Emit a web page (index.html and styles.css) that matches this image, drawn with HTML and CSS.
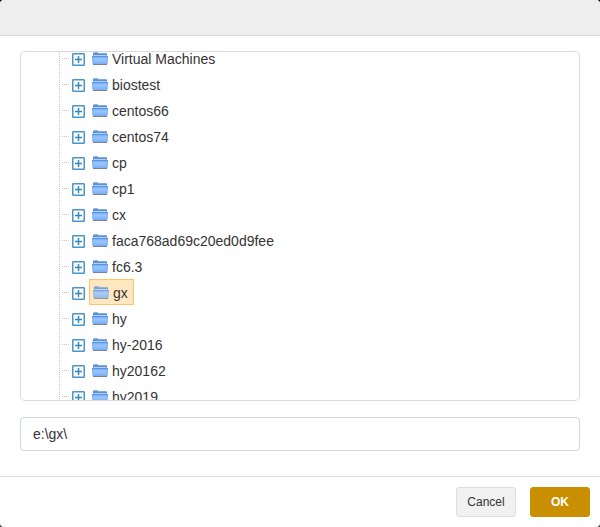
FILE: index.html
```html
<!DOCTYPE html>
<html lang="en">
<head>
<meta charset="utf-8">
<title>Select folder</title>
<link rel="stylesheet" href="styles.css">
</head>
<body>
<svg width="0" height="0" class="defs">
  <defs>
    <linearGradient id="face" x1="0" y1="0" x2="0" y2="1">
      <stop offset="0" stop-color="#6ca2ee"/><stop offset=".4" stop-color="#9ac7ff"/><stop offset="1" stop-color="#79adf8"/>
    </linearGradient>
    <symbol id="folder" viewBox="0 0 16 13">
      <path d="M1 5V1.2L2 .2H5.4L6.4 1.2H14.5L15 1.8V5Z" fill="#5890df"/>
      <path d="M2 .6H5.4" stroke="#8bb5ee" stroke-width=".8"/>
      <path d="M1.5 3.5H14.5" stroke="#b4d5fb"/>
      <path d="M0 4H16L15.2 12H.8Z" fill="url(#face)"/>
      <path d="M0 4.5H16" stroke="#5c94e4"/>
      <path d="M.4 4L1.1 12M15.6 4L14.9 12" stroke="#6ba0ea" stroke-width=".7"/>
      <path d="M1 12.5H15" stroke="#7c8390"/>
    </symbol>
    <symbol id="plus" viewBox="0 0 13 13">
      <rect x=".75" y=".75" width="11.5" height="11.5" rx=".6" fill="#fff" stroke="#4798c8" stroke-width="1.5"/>
      <path d="M3 6.5H10M6.5 3V10" stroke="#3289bb" stroke-width="1.5"/>
    </symbol>
  </defs>
</svg>
<div class="dialog">
  <header class="header"></header>
  <main class="content">
    <div class="tree-box"><ul class="tree" id="tree"></ul></div>
    <input class="path" type="text" value="e:\gx\" aria-label="Path">
  </main>
  <footer class="footer">
    <button class="btn cancel">Cancel</button>
    <button class="btn ok">OK</button>
  </footer>
</div>
<script src="tree.js"></script>
</body>
</html>
```
FILE: styles.css
```css
* { box-sizing: border-box; }
html { background: linear-gradient(#000 50%, #444 50%); }
body {
  margin: 0;
  font-family: "Liberation Sans", Arial, sans-serif;
  color: #333;
}
.defs { position: absolute; }
.dialog {
  display: flex;
  flex-direction: column;
  height: 527px;
  background: #fff;
  border-radius: 4px;
  overflow: hidden;
}
.header {
  height: 36px;
  flex: none;
  background: #eee;
  border-bottom: 1px solid #dadada;
}
.content {
  flex: 1;
  display: flex;
  flex-direction: column;
  gap: 16px;
  padding: 15px 20px 0;
}
.tree-box {
  height: 350px;
  border: 1px solid #d9d9d9;
  border-radius: 5px;
  overflow: hidden;
}
.tree {
  list-style: none;
  margin: -6px 0 0 38px;
  padding: 0;
  background: repeating-linear-gradient(#c4c4c4 0 1px, transparent 1px 2px) 0 0 / 1px 100% no-repeat;
}
.row {
  display: flex;
  align-items: center;
  height: 26px;
  font-size: 14px;
  line-height: 24px;
}
.branch {
  width: 8px;
  height: 1px;
  margin: 0 2px 1px 3px;
  background: repeating-linear-gradient(90deg, #c4c4c4 0 1px, transparent 1px 2px);
}
.toggle { width: 13px; height: 13px; margin-top: 1px; }
.node {
  display: flex;
  align-items: center;
  gap: 4px;
  height: 26px;
  margin-left: 4px;
  padding: 0 5px 0 3px;
}
.node.selected {
  margin-top: -2px;
  padding-top: 2px;
  border: 1px solid #ffc36e;
  background: #ffe8bf;
}
.folder { width: 16px; height: 13px; margin-bottom: 1px; }
.selected .folder { opacity: .8; }
.path {
  height: 34px;
  padding: 0 12px;
  border: 1px solid #d2d6de;
  border-radius: 4px;
  font: 14px "Liberation Sans", Arial, sans-serif;
  color: #333;
  background: #fff;
}
.footer {
  flex: none;
  display: flex;
  justify-content: flex-end;
  gap: 14px;
  height: 51px;
  padding: 10px 10px 0;
  border-top: 1px solid #dadada;
}
.btn {
  width: 60px;
  height: 30px;
  padding: 0;
  border: 1px solid #ddd;
  border-radius: 3px;
  font: 12px "Liberation Sans", Arial, sans-serif;
  color: #333;
  background: #f1f1f1;
}
.btn.ok {
  border-color: #c98f00;
  background: #c98f00;
  color: #fff;
  font-weight: bold;
}
```
FILE: tree.js
```js
const folders = ["Virtual Machines", "biostest", "centos66", "centos74", "cp", "cp1", "cx",
  "faca768ad69c20ed0d9fee", "fc6.3", "gx", "hy", "hy-2016", "hy20162", "hy2019"];
const selected = "gx";
document.getElementById("tree").innerHTML = folders.map(name => `
  <li class="row">
    <span class="branch"></span>
    <svg class="toggle"><use href="#plus"/></svg>
    <span class="node${name === selected ? " selected" : ""}">
      <svg class="folder"><use href="#folder"/></svg><span>${name}</span>
    </span>
  </li>`).join("");
```
